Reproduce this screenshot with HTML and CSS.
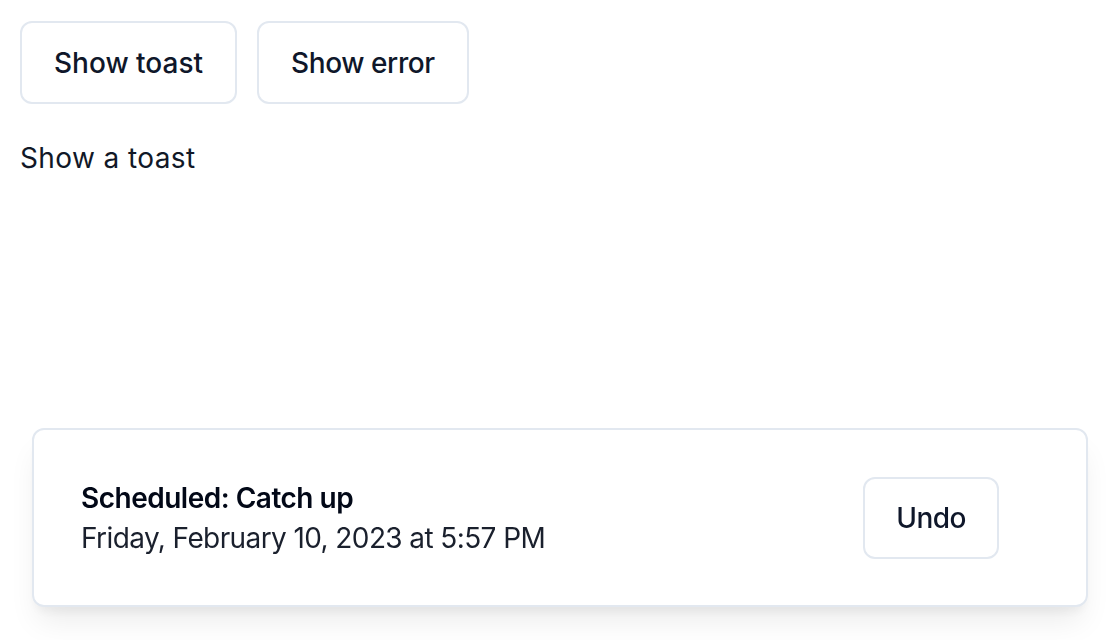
FILE: index.html
```html
<!DOCTYPE html>
<html lang="en">
<head>
  <meta charset="UTF-8">
  <meta name="viewport" content="width=device-width, initial-scale=1.0">
  <title>Toast</title>
  <link rel="stylesheet" href="styles.css">
</head>
<body>
  <div class="actions">
    <button class="btn">Show toast</button>
    <button class="btn">Show error</button>
  </div>
  <p class="hint">Show a toast</p>

  <div class="toast-viewport">
    <div class="toast">
      <div class="toast-text">
        <div class="toast-title">Scheduled: Catch up</div>
        <div class="toast-desc">Friday, February 10, 2023 at 5:57 PM</div>
      </div>
      <button class="btn btn-undo">Undo</button>
    </div>
  </div>
</body>
</html>
```

FILE: styles.css
```css
* {
  margin: 0;
  padding: 0;
  box-sizing: border-box;
}

body {
  font-family: Inter, "Noto Sans", sans-serif;
  background-color: #ffffff;
  color: #020817;
  padding: 21px 20px;
}

.actions {
  display: flex;
  gap: 20px;
}

.btn {
  font-family: inherit;
  height: 83px;
  padding: 0 32px;
  font-size: 28px;
  font-weight: 500;
  color: #0f172a;
  background: #ffffff;
  border: 2px solid #e2e8f0;
  border-radius: 12px;
  cursor: pointer;
}

.btn + .btn {
  letter-spacing: -0.4px;
}

.btn-undo {
  height: 82px;
  padding: 0 31px;
  letter-spacing: -0.5px;
}

.hint {
  margin-top: 34px;
  font-size: 28px;
  line-height: 40px;
  letter-spacing: 0.4px;
  color: #111827;
}

.toast-viewport {
  position: fixed;
  left: 0;
  right: 0;
  bottom: 0;
  padding: 0 32px 33px;
}

.toast {
  display: flex;
  align-items: center;
  justify-content: space-between;
  padding: 47px 87px 46px 47px;
  background: #ffffff;
  border: 2px solid #e2e8f0;
  border-radius: 12px;
  box-shadow: 0 20px 30px -6px rgba(0, 0, 0, 0.08), 0 8px 12px -4px rgba(0, 0, 0, 0.06);
}

.toast-title {
  font-size: 28px;
  line-height: 40px;
  font-weight: 600;
  letter-spacing: -0.5px;
}

.toast-desc {
  font-size: 28px;
  line-height: 40px;
  letter-spacing: -0.6px;
  opacity: 0.9;
}
```
